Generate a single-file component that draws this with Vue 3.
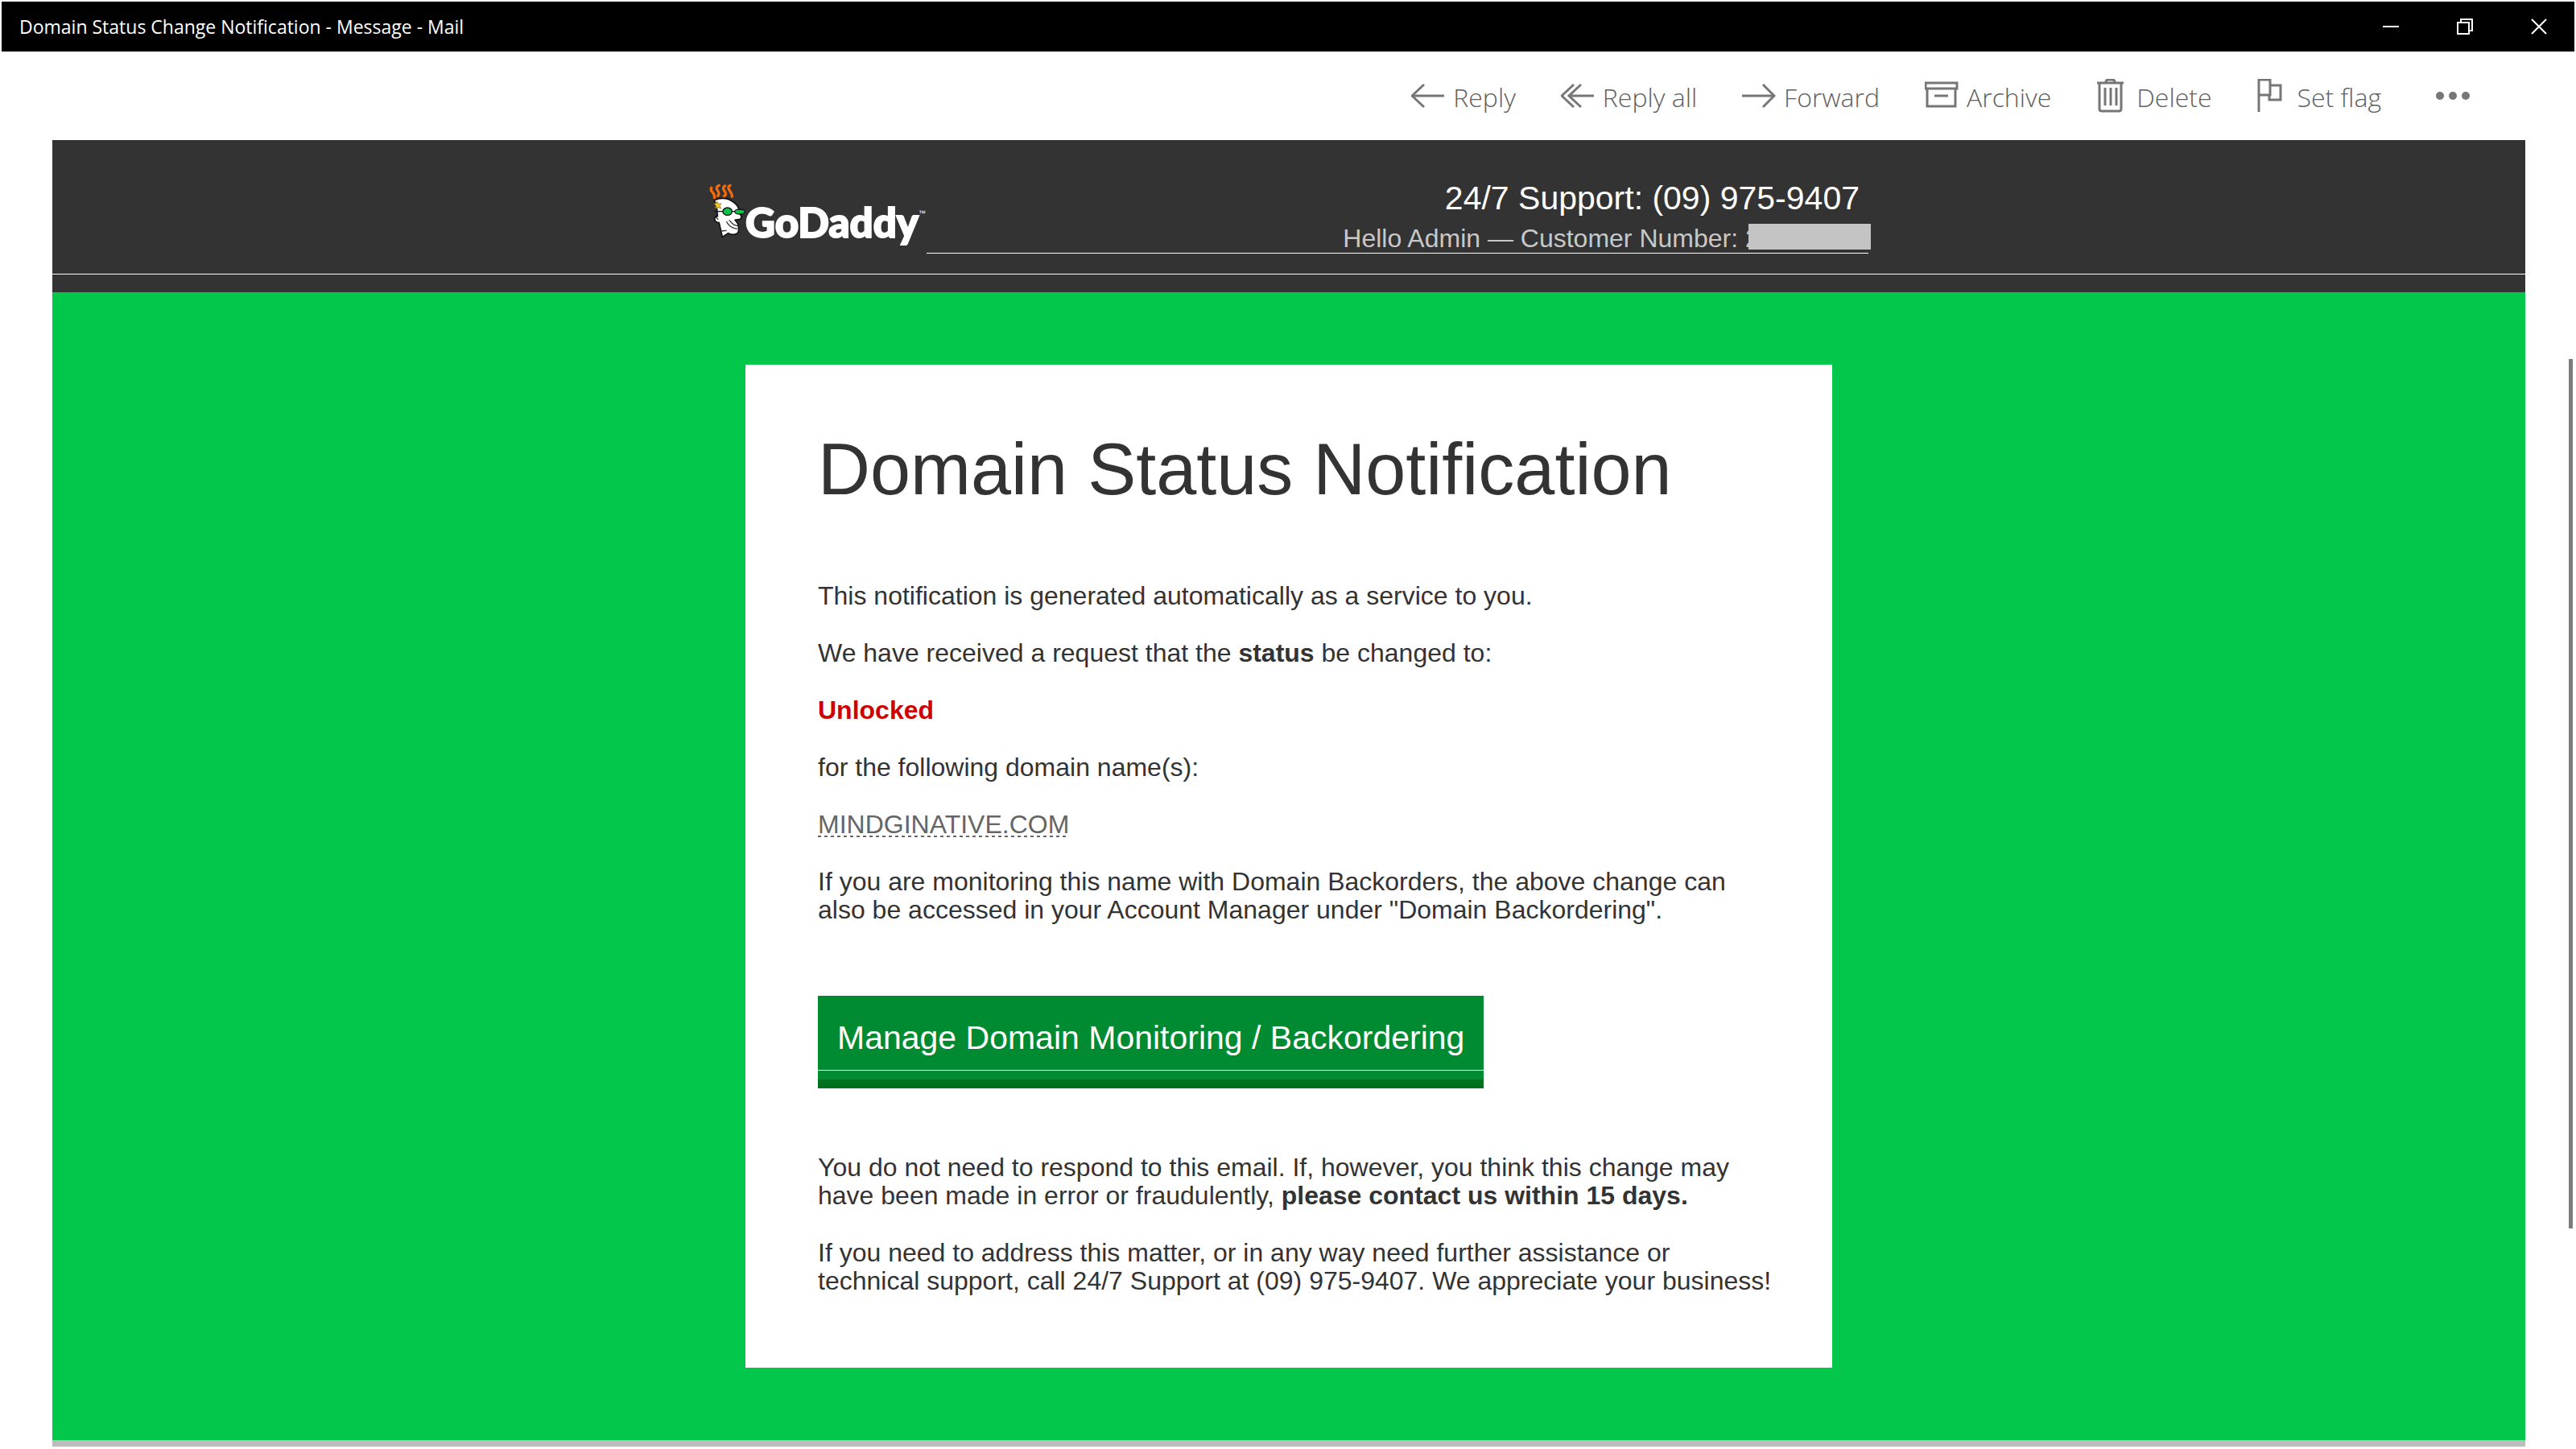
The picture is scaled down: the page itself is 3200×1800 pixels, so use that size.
<script setup>
const actions = [
  { id: 'reply', label: 'Reply', w: 42, paths: ['M41 21H1', 'M16 7L1 21L16 35'] },
  { id: 'reply-all', label: 'Reply all', w: 42, paths: ['M41 21H10', 'M25 7L10 21L25 35', 'M16 7L1 21L16 35'] },
  { id: 'forward', label: 'Forward', w: 42, paths: ['M0 21H40', 'M26 7L40 21L26 35'] },
  { id: 'archive', label: 'Archive', w: 42, paths: ['M1 5H40V12H1Z', 'M3 12V34H38V12', 'M12 21H29'] },
  { id: 'delete', label: 'Delete', w: 36, paths: ['M1 5H34', 'M12 5V4Q12 1 15 1H20Q23 1 23 4V5', 'M4 5V37Q4 40 7 40H28Q31 40 31 37V5', 'M11 11V33', 'M18 11V33', 'M25 11V33'] },
  { id: 'flag', label: 'Set flag', w: 36, paths: ['M2 41V1H16V20H2', 'M16 8H29V26H15V20'] },
]
</script>

<template>
  <div class="window">
    <header class="titlebar">
      <span class="caption">Domain Status Change Notification - Message - Mail</span>
      <div class="controls">
        <button type="button" aria-label="Minimize">
          <svg width="20" height="20" viewBox="0 0 20 20"><path d="M0 10H20" /></svg>
        </button>
        <button type="button" aria-label="Restore">
          <svg width="20" height="20" viewBox="0 0 20 20"><path d="M1 5H15V19H1ZM5 5V1H19V15H15" /></svg>
        </button>
        <button type="button" aria-label="Close">
          <svg width="20" height="20" viewBox="0 0 20 20"><path d="M1 1L19 19M19 1L1 19" /></svg>
        </button>
      </div>
    </header>

    <nav class="toolbar" aria-label="Message actions">
      <button v-for="a in actions" :key="a.id" type="button" :class="['action', a.id]">
        <svg :width="a.w" height="42" :viewBox="`0 0 ${a.w} 42`">
          <path v-for="d in a.paths" :key="d" :d="d" />
        </svg>
        <span>{{ a.label }}</span>
      </button>
      <button type="button" class="more" aria-label="More actions">
        <svg width="42" height="12" viewBox="0 0 42 12">
          <circle cx="5" cy="6" r="5" /><circle cx="21" cy="6" r="5" /><circle cx="37" cy="6" r="5" />
        </svg>
      </button>
    </nav>

    <main class="message">
      <div class="banner">
        <div class="banner-inner">
          <a class="logo" href="#" aria-label="GoDaddy">
            <svg class="mascot" width="45" height="68" viewBox="60 54 135 204">
              <g fill="none" stroke="#f26a0a" stroke-width="10" stroke-linecap="round" stroke-linejoin="round">
                <path d="M68 70Q64 78 72 86T80 107" />
                <path d="M97 61Q82 66 91 79T92 100" />
                <path d="M119 63Q107 68 117 82T115 101" />
                <path d="M138 61Q126 65 136 80T145 103" />
              </g>
              <path d="M79 116Q104 104 133 113Q164 127 171 150L188 154Q184 170 176 170Q184 183 174 187L156 190L167 204Q174 238 162 241Q147 248 131 239L109 253L97 200Q81 200 80 184Q82 176 91 176L88 140Z" fill="#fff" stroke="#111" stroke-width="5" stroke-linejoin="round" />
              <path d="M89 120L94 129L105 129L99 137L104 147L92 142L83 148L85 136L77 129L87 128Z" fill="#fbc81e" stroke="#7a6111" stroke-width="2" />
              <path d="M78 158H112M144 158H158" stroke="#111" stroke-width="4" />
              <path d="M85 180L94 188M124 195Q136 220 165 223M134 190L150 207L166 212M105 231L125 229" fill="none" stroke="#333" stroke-width="4" />
              <ellipse cx="128" cy="158" rx="17" ry="14" fill="#08c44a" stroke="#111" stroke-width="4" />
              <ellipse cx="174" cy="159" rx="19" ry="9" fill="#08c44a" stroke="#111" stroke-width="4" />
            </svg>
            <span class="wordmark">GoDaddy</span>
            <span class="tm">™</span>
          </a>
          <div class="support">
            <p class="phone">24/7 Support: (09) 975-9407</p>
            <p class="hello">Hello Admin — Customer Number: <span class="number">2<span class="redacted"></span></span></p>
          </div>
        </div>
      </div>

      <div class="body">
        <article class="card">
          <h1>Domain Status Notification</h1>
          <p>This notification is generated automatically as a service to you.</p>
          <p>We have received a request that the <strong>status</strong> be changed to:</p>
          <p><strong class="alert">Unlocked</strong></p>
          <p>for the following domain name(s):</p>
          <p><a class="domain" href="#">MINDGINATIVE.COM</a></p>
          <p>
            If you are monitoring this name with Domain Backorders, the above change can<br />
            also be accessed in your Account Manager under "Domain Backordering".
          </p>
          <a class="cta" href="#"><span>Manage Domain Monitoring / Backordering</span></a>
          <p>
            You do not need to respond to this email. If, however, you think this change may<br />
            have been made in error or fraudulently, <strong>please contact us within 15 days.</strong>
          </p>
          <p>
            If you need to address this matter, or in any way need further assistance or<br />
            technical support, call 24/7 Support at (09) 975-9407. We appreciate your business!
          </p>
        </article>
      </div>
    </main>
    <div class="scrollbar"></div>
  </div>
</template>

<style>
body {
  background: #fff;
}
</style>

<style scoped>
.window {
  position: relative;
  box-sizing: border-box;
  min-height: 100vh;
  padding: 2px 2px 3px;
  font-family: "Liberation Sans", Arial, sans-serif;
  color: #333;
}

button {
  border: 0;
  padding: 0;
  background: none;
  font: inherit;
  color: inherit;
}

svg {
  display: block;
  flex: none;
}

.titlebar {
  display: flex;
  align-items: center;
  justify-content: space-between;
  height: 62px;
  padding-left: 22px;
  background: #000;
  color: #fff;
  font: 23px/32px "Open Sans", "Noto Sans", sans-serif;
}

.controls {
  display: flex;
  gap: 4px;
}

.controls button {
  display: flex;
  align-items: center;
  justify-content: center;
  width: 88px;
  height: 62px;
}

.controls svg {
  fill: none;
  stroke: #fff;
  stroke-width: 2;
}

.toolbar {
  display: flex;
  justify-content: flex-end;
  align-items: center;
  gap: 56px;
  height: 110px;
  padding-right: 130px;
  color: #606060;
  font: 300 32px/48px "Open Sans", "Noto Sans", sans-serif;
}

.action {
  display: flex;
  align-items: center;
  gap: 10px;
}

.action span {
  padding-top: 4px;
}

.action svg {
  fill: none;
  stroke: #767676;
  stroke-width: 3;
}

.delete,
.flag {
  gap: 14px;
}

.more {
  margin-left: 12px;
}

.more svg {
  fill: #767676;
}

.message {
  margin: 0 61px 0 63px;
}

.banner {
  height: 189px;
  background: #333;
  display: flex;
  flex-direction: column;
}

.banner-inner {
  display: flex;
  align-items: flex-start;
  width: 1440px;
  max-width: 100%;
  margin: 0 auto;
  height: 166px;
}

.banner::after {
  content: "";
  height: 1px;
  background: #fff;
}

.logo {
  display: flex;
  width: 270px;
  padding-top: 54px;
  color: #fff;
  text-decoration: none;
}

.wordmark {
  margin-top: 18px;
  font: 900 51px/60px Lato, sans-serif;
  -webkit-text-stroke: 2px #fff;
}

.tm {
  margin-top: 31px;
  font-size: 9px;
  line-height: 12px;
}

.support {
  flex: 1;
  height: 141px;
  border-bottom: 1px solid #fff;
  padding: 48px 11px 0 0;
  box-sizing: border-box;
  text-align: right;
  white-space: nowrap;
}

.support p {
  margin: 0;
}

.phone {
  font-size: 41px;
  line-height: 48px;
  color: #fff;
}

.hello {
  font-size: 32px;
  line-height: 52px;
  color: #c8c8c8;
}

.number {
  position: relative;
  display: inline-block;
  width: 142px;
  text-align: left;
}

.redacted {
  position: absolute;
  left: 4px;
  top: 8px;
  width: 152px;
  height: 32px;
  background: #c4c4c4;
}

.body {
  padding: 90px 0;
  background: #03c74a;
  border-bottom: 8px solid #bdbdbd;
}

.card {
  box-sizing: border-box;
  width: 1350px;
  max-width: 100%;
  margin: 0 auto;
  padding: 80px 64px 90px 90px;
  background: #fff;
  font-size: 32px;
  line-height: 35px;
}

.card h1 {
  margin: 0 0 90px;
  font-size: 90px;
  font-weight: 400;
  line-height: 100px;
}

.card p {
  margin: 0 0 36px;
}

.card p:last-child {
  margin-bottom: 0;
}

.alert {
  color: #c00;
}

.domain {
  color: #666;
  text-decoration: none;
  background: repeating-linear-gradient(90deg, #666 0 4px, transparent 4px 8px) 0 calc(100% - 2px) / 100% 2px no-repeat;
}

.cta {
  display: block;
  width: fit-content;
  margin: 89px 0 81px;
  background: #008a32;
  border-bottom: 11px solid #00701c;
  padding-bottom: 11px;
  color: #fff;
  font-size: 41px;
  line-height: 48px;
  text-decoration: none;
}

.cta span {
  display: block;
  padding: 28px 24px 16px;
  border-bottom: 1px solid #fff;
}

.scrollbar {
  position: absolute;
  right: 4px;
  top: 446px;
  width: 5px;
  height: 60%;
  background: #7c7c7c;
}
</style>
